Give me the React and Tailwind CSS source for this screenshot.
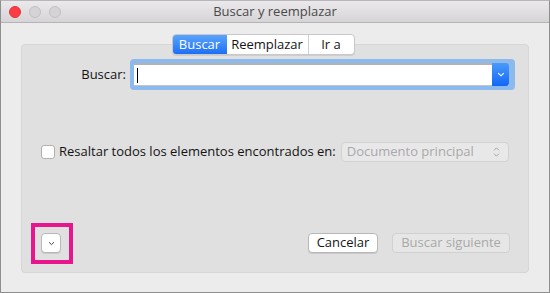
import React from 'react';

const font = { fontFamily: '"Open Sans", "Liberation Sans", Arial, sans-serif' };

const Light = ({ red }) => (
  <div
    className={
      red
        ? 'w-[12px] h-[12px] rounded-full bg-[#fc3c44] border border-[#e0343b]'
        : 'w-[12px] h-[12px] rounded-full bg-[#d5d3d5] border border-[#c2c0c2]'
    }
  />
);

const Chevron = ({ className, color = 'currentColor' }) => (
  <svg viewBox="0 0 10 6" className={className}>
    <path d="M1.5 1.2 L5 4.6 L8.5 1.2" fill="none" stroke={color} strokeWidth="1.4" />
  </svg>
);

export default function App() {
  return (
    <div className="w-[550px] h-[293px] bg-white" style={font}>
      <div className="w-[550px] h-[293px] border border-[#8e8e8e] border-t-[#b8b6b8] flex flex-col bg-[#ececec] text-[13px] text-[#141414]">
        {/* title bar */}
        <div className="h-[22px] shrink-0 flex items-center relative bg-gradient-to-b from-[#ebe9eb] to-[#d6d4d6] border-b border-[#b5b3b5]">
          <div className="flex items-center gap-[8px] pl-[8px]">
            <Light red />
            <Light />
            <Light />
          </div>
          <div className="flex-1 text-center text-[13px] text-[#4a4a4a] -ml-[60px]">Buscar y reemplazar</div>
        </div>

        {/* body */}
        <div className="flex-1 flex flex-col px-[20px] pt-[11px] pb-[19px]">
          <div className="flex justify-center relative z-10 pr-[24px]">
            <div className="flex h-[21px] rounded-[4px] border border-[#c8c8c8] bg-white overflow-hidden shadow-[0_1px_0_rgba(0,0,0,0.08)]">
              <div className="w-[54px] flex items-center justify-center text-white bg-gradient-to-b from-[#5aa3fb] to-[#1a6ff6]">Buscar</div>
              <div className="w-[82px] flex items-center justify-center border-r border-[#d0d0d0]">Reemplazar</div>
              <div className="w-[45px] flex items-center justify-center">Ir a</div>
            </div>
          </div>

          <div className="flex-1 -mt-[11px] rounded-[4px] bg-[#e0e0e0] border border-[#d6d6d6] flex flex-col pl-[19px] pr-[18px] pt-[14px] pb-[19px]">
            {/* Buscar row */}
            <div className="flex items-center -mr-[5px]">
              <div className="w-[89px] text-right pr-[4px]">Buscar:</div>
              <div className="flex-1 rounded-[4px] bg-[#8bbaef] p-[4px] pr-[6px]">
                <div className="h-[23px] bg-white border-t-2 border-[#b3b3b3] border-b border-b-[#c4c4c4] flex items-stretch">
                  <div className="flex-1 flex items-center pl-[3px]">
                    <div className="w-[1px] h-[15px] bg-black" />
                  </div>
                  <div className="w-[17px] -mt-[2px] -mb-[1px] rounded-r-[3px] bg-gradient-to-b from-[#4a9afa] to-[#1266f5] flex items-center justify-center">
                    <Chevron className="w-[8px] h-[5px]" color="#ffffff" />
                  </div>
                </div>
              </div>
            </div>

            {/* highlight row */}
            <div className="flex items-center mt-[52px]">
              <div className="w-[14px] h-[14px] rounded-[3px] bg-white border border-[#b0b0b0]" />
              <div className="ml-[4px]">Resaltar todos los elementos encontrados en:</div>
              <div className="ml-[5px] w-[168px] h-[20px] rounded-[4px] border border-[#d2d2d2] bg-[#e8e8e8] flex items-center justify-between pl-[5px] pr-[8px] text-[#a9a9a9]">
                <span>Documento principal</span>
                <svg viewBox="0 0 8 12" className="w-[7px] h-[10px]">
                  <path d="M1 4 L4 1 L7 4 M1 8 L4 11 L7 8" fill="none" stroke="#a0a0a0" strokeWidth="1.1" />
                </svg>
              </div>
            </div>

            <div className="flex-1" />

            {/* bottom row */}
            <div className="flex items-center">
              <div className="relative">
                <div className="absolute -left-[10px] -top-[10px] w-[42px] h-[41px] border-[4px] border-[#e8168c]" />
                <div className="w-[20px] h-[20px] rounded-[4px] bg-white border border-[#b8b8b8] shadow-[0_1px_0_rgba(0,0,0,0.1)] flex items-center justify-center">
                  <Chevron className="w-[7px] h-[5px]" color="#444444" />
                </div>
              </div>
              <div className="flex-1" />
              <div className="w-[70px] h-[20px] rounded-[4px] bg-white border border-[#b8b8b8] shadow-[0_1px_0_rgba(0,0,0,0.1)] flex items-center justify-center">Cancelar</div>
              <div className="ml-[14px] w-[118px] h-[20px] rounded-[4px] bg-[#e6e6e6] border border-[#d0d0d0] flex items-center justify-center text-[#a9a9a9]">Buscar siguiente</div>
            </div>
          </div>
        </div>
      </div>
    </div>
  );
}
